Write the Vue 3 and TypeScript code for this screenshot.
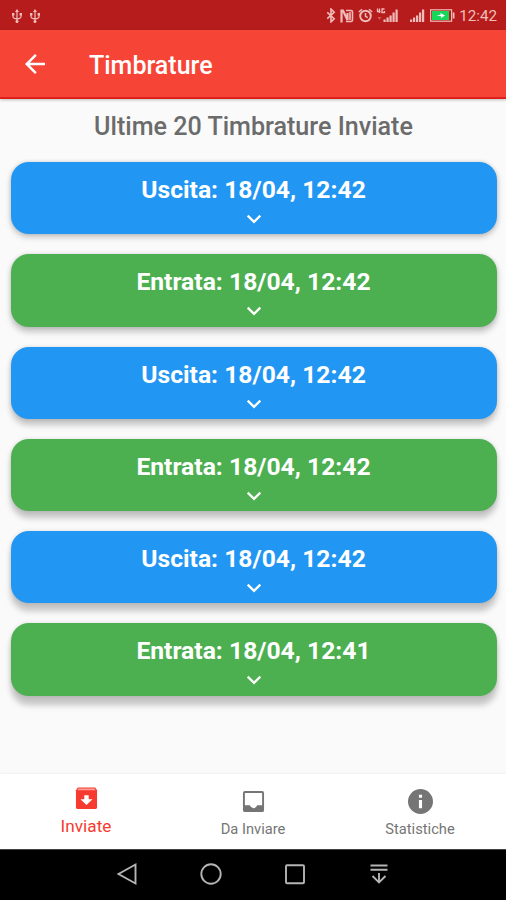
<script setup lang="ts">
interface Stamp {
  kind: 'Uscita' | 'Entrata'
  when: string
}

const stamps: Stamp[] = [
  { kind: 'Uscita', when: '18/04, 12:42' },
  { kind: 'Entrata', when: '18/04, 12:42' },
  { kind: 'Uscita', when: '18/04, 12:42' },
  { kind: 'Entrata', when: '18/04, 12:42' },
  { kind: 'Uscita', when: '18/04, 12:42' },
  { kind: 'Entrata', when: '18/04, 12:41' },
]

// Shadows fall further below the cards that sit lower on the screen.
const shadowDrop = (index: number): string => `${3 + index * 1.1}px`
</script>

<template>
  <div class="screen">
    <div class="status">
      <div class="status-left">
        <svg v-for="n in 2" :key="n" class="usb" viewBox="0 0 12 16">
          <path d="M6 3v10M2 6v2.500q0 2 4 2.500q4-.5 4-2.500V6" fill="none" stroke="currentColor" stroke-width="1.200" />
          <path d="M6 1l2 3H4zM1 5h2.400v2.400H1zM8.600 5H11v2.400H8.600z" fill="currentColor" />
          <circle cx="6" cy="13.500" r="1.500" fill="currentColor" />
        </svg>
      </div>
      <div class="status-right">
        <svg class="bt" viewBox="0 0 9 14">
          <path d="M1 4l6.500 6L4.500 13V1l3 3L1 10" fill="none" stroke="currentColor" stroke-width="1.500" />
        </svg>
        <svg class="nfc" viewBox="0 0 14 14">
          <path d="M1.500 13.500V1.500h1.500L7.500 11V4" fill="none" stroke="currentColor" stroke-width="2.200" />
          <path d="M6 1.500h5q1.500 0 1.500 1.500v8q0 1.500-1.500 1.500H6M10 3v8" fill="none" stroke="currentColor" stroke-width="1.600" />
        </svg>
        <svg class="alarm" viewBox="0 0 15 15">
          <circle cx="7.500" cy="8" r="5.300" fill="none" stroke="currentColor" stroke-width="1.900" />
          <path d="M.8 4L4 1.200M14.200 4L11 1.200M7.500 5v3.300l2.300 1.400" fill="none" stroke="currentColor" stroke-width="1.500" />
        </svg>
        <svg class="signal-4g" viewBox="0 0 22 15">
          <path d="M1.500 .5v3h3M3.500 .5v4.500M8.500 1H6v3.500h2.500V3" fill="none" stroke="currentColor" stroke-width="1.300" />
          <path d="M1.500 9h4l-2 3z" fill="currentColor" opacity=".4" />
          <path d="M7.500 11.500h2.200V14H7.500zM10.500 9.500h2.200V14h-2.200zM13.500 7.500h2.200V14h-2.200zM16.500 4.500h2.200V14h-2.200zM19.500 1.500h2.200V14h-2.200z" fill="currentColor" />
        </svg>
        <svg class="signal" viewBox="0 0 15 15">
          <path d="M0 11.500h2.200V14H0zM3 9.500h2.200V14H3zM6 7.500h2.200V14H6zM9 4.500h2.200V14H9zM12 1.500h2.200V14H12z" fill="currentColor" />
        </svg>
        <svg class="battery" viewBox="0 0 25 13">
          <rect x=".6" y=".8" width="21" height="11.400" fill="none" stroke="currentColor" stroke-width="1.200" />
          <rect x="2" y="2" width="17" height="9" fill="#15d85b" />
          <path d="M6.500 6.500l4-.8V4l4.500 2.500L11 9V7.300z" fill="#fff" />
          <path d="M23.600 3.500v6" stroke="currentColor" stroke-width="1.800" />
        </svg>
        <span class="clock">12:42</span>
      </div>
    </div>

    <header class="appbar">
      <svg class="back" viewBox="0 0 24 24">
        <path d="M20 11H7.830l5.590-5.590L12 4l-8 8 8 8 1.410-1.410L7.830 13H20z" fill="currentColor" />
      </svg>
      <h1 class="appbar-title">Timbrature</h1>
    </header>

    <main class="content">
      <h2 class="heading">Ultime 20 Timbrature Inviate</h2>
      <div class="cards">
        <article
          v-for="(stamp, index) in stamps"
          :key="index"
          class="card"
          :class="stamp.kind === 'Uscita' ? 'card-out' : 'card-in'"
          :style="{ '--drop': shadowDrop(index) }"
        >
          <span class="card-text">{{ stamp.kind }}: {{ stamp.when }}</span>
          <svg class="chevron" viewBox="0 0 16 10">
            <path d="M1.700 1.700L8 7.800l6.300-6.100" fill="none" stroke="currentColor" stroke-width="2.300" />
          </svg>
        </article>
      </div>
    </main>

    <nav class="tabs">
      <a class="tab tab-active">
        <svg class="tab-icon" viewBox="0 0 24 24">
          <path d="M3 .5h18l2 3V21q0 2-2 2H3q-2 0-2-2V3.500z" fill="#f63a2f" />
          <path d="M3.500 1.500h17l1 1.800h-19z" fill="#ff9d96" />
          <path d="M9.700 8.500h4.600v4.200h4L12 18.800l-6.300-6.100h4z" fill="#fff" />
        </svg>
        <span>Inviate</span>
      </a>
      <a class="tab">
        <svg class="tab-icon" viewBox="0 0 24 24">
          <path d="M3 1h18q2 0 2 2v18q0 2-2 2H3q-2 0-2-2V3q0-2 2-2zm0 2v13h5.200q1 3 3.800 3t3.800-3H21V3z" fill="currentColor" fill-rule="evenodd" />
        </svg>
        <span>Da Inviare</span>
      </a>
      <a class="tab">
        <svg class="tab-icon tab-icon-info" viewBox="0 0 24 24">
          <path d="M12 0a12 12 0 1 0 0 24 12 12 0 0 0 0-24zm-1.500 5.500h3v3h-3zm0 5h3v8h-3z" fill="currentColor" fill-rule="evenodd" />
        </svg>
        <span>Statistiche</span>
      </a>
    </nav>

    <div class="sysbar">
      <svg viewBox="0 0 24 24"><path d="M20.500 2.500v19L3.500 12z" /></svg>
      <svg viewBox="0 0 24 24"><circle cx="12" cy="12" r="9.700" /></svg>
      <svg viewBox="0 0 24 24"><rect x="3" y="3.200" width="18" height="18" rx="1" /></svg>
      <svg viewBox="0 0 24 24"><path d="M3.500 3.500h17M3.500 7.800h17M12 11v9.500M5.500 14l6.500 6.500 6.500-6.500" /></svg>
    </div>
  </div>
</template>

<style>
body {
  margin: 0;
}
</style>

<style scoped>
.screen {
  display: flex;
  flex-direction: column;
  width: 506px;
  height: 900px;
  overflow: hidden;
  background: #fafafa;
  font-family: Roboto, "Liberation Sans", sans-serif;
}
.status {
  display: flex;
  flex: none;
  align-items: center;
  justify-content: space-between;
  box-sizing: border-box;
  height: 30px;
  padding: 1px 9px 0 11px;
  background: #b71c1c;
  color: #f0bcb9;
}
.status-left,
.status-right {
  display: flex;
  align-items: center;
}
.status-left {
  gap: 6px;
}
.usb {
  width: 12px;
  height: 16px;
}
.bt {
  width: 10px;
  height: 15px;
  margin-right: 4px;
}
.nfc {
  width: 14px;
  height: 14px;
  margin-right: 4px;
}
.alarm {
  width: 15px;
  height: 15px;
  margin-right: 3px;
}
.signal-4g {
  width: 22px;
  height: 15px;
  margin-right: 12px;
}
.signal {
  width: 15px;
  height: 15px;
  margin-right: 5px;
}
.battery {
  width: 25px;
  height: 13px;
  margin-right: 4px;
}
.clock {
  font-size: 15.200px;
  line-height: 20px;
}
.appbar {
  z-index: 1;
  display: flex;
  flex: none;
  align-items: center;
  box-sizing: border-box;
  height: 69px;
  padding: 1px 21px 0 20px;
  border-bottom: 2px solid #de1f1b;
  background: #f64437;
  box-shadow: 0 1px 3px rgba(0, 0, 0, 0.25);
  color: #fff;
}
.back {
  width: 30px;
  height: 30px;
}
.appbar-title {
  margin: 3px 0 0 39px;
  font-size: 25px;
  font-weight: 500;
  line-height: 30px;
}
.content {
  flex: 1;
}
.heading {
  margin: 13px 0 20px;
  padding-left: 1px;
  color: #6b6b6b;
  font-size: 25.100px;
  font-weight: 500;
  line-height: 30px;
  text-align: center;
}
.cards {
  display: flex;
  flex-direction: column;
  gap: 20px;
  padding: 0 9.500px 0 10.500px;
}
.card {
  display: flex;
  flex-direction: column;
  align-items: center;
  box-sizing: border-box;
  height: 72.300px;
  padding-top: 13px;
  border-radius: 18px;
  box-shadow: 0 var(--drop) 6px rgba(0, 0, 0, 0.22), 0 0 4px rgba(0, 0, 0, 0.12);
  color: #fff;
}
.card-out {
  background: #2196f3;
}
.card-in {
  background: #4caf50;
}
.card-text {
  font-size: 24.700px;
  font-weight: 700;
  line-height: 30px;
}
.chevron {
  width: 16px;
  height: 10px;
  margin-top: 9px;
}
.tabs {
  display: grid;
  flex: none;
  grid-template-columns: repeat(3, 167px);
  justify-content: center;
  height: 75px;
  background: #fff;
  box-shadow: 0 -1px 2px rgba(0, 0, 0, 0.04);
}
.tab {
  display: flex;
  flex-direction: column;
  align-items: center;
  padding-top: 16px;
  color: #757575;
  font-size: 14.700px;
  line-height: 18px;
}
.tab-active {
  padding-top: 13px;
  color: #f63a2f;
  font-size: 17.200px;
  line-height: 20px;
}
.tab-icon {
  width: 23px;
  height: 23px;
  margin-bottom: 7px;
}
.tab-icon-info {
  width: 25px;
  height: 25px;
  margin: -1px 0 6px;
}
.tab-active .tab-icon {
  margin-bottom: 6px;
}
.sysbar {
  display: flex;
  flex: none;
  align-items: center;
  justify-content: center;
  gap: 60px;
  box-sizing: border-box;
  height: 51px;
  padding-bottom: 2px;
  border-top: 1px solid #444;
  background: #000;
}
.sysbar svg {
  width: 24px;
  height: 24px;
  fill: none;
  stroke: #b4b4b4;
  stroke-width: 1.900;
}
</style>
